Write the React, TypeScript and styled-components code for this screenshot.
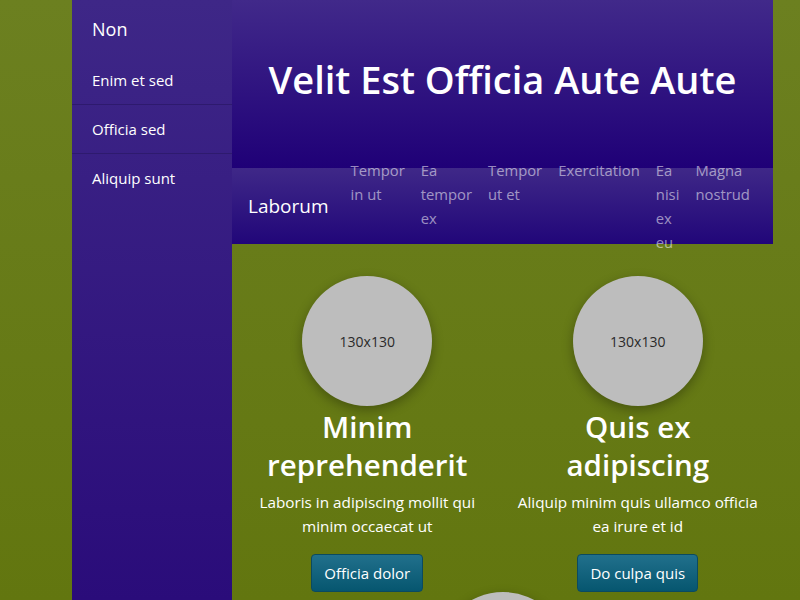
import React from "react";
import styled, { createGlobalStyle } from "styled-components";

const FONT = `"Open Sans", "Noto Sans", "Liberation Sans", sans-serif`;

const Global = createGlobalStyle`
  html, body { margin: 0; padding: 0; }
  body {
    font-family: ${FONT};
    background: linear-gradient(180deg, #6c8020 0%, #62760f 100%);
    min-height: 600px;
    overflow: hidden;
  }
  * { box-sizing: border-box; }
`;

const Page = styled.div`
  display: flex;
  align-items: stretch;
  padding-left: 72px;
  height: 600px;
  overflow: hidden;
`;

const Sidebar = styled.aside`
  width: 160px;
  flex: 0 0 160px;
  height: 600px;
  background: linear-gradient(180deg, #3e2787 0%, #2a0c7a 100%);
  color: #fff;
`;

const SideTitle = styled.div`
  padding: 17px 20px 15px;
  font-size: 18px;
  line-height: 24px;
`;

const SideList = styled.ul`
  list-style: none;
  margin: 0;
  padding: 0;
`;

const SideItem = styled.li`
  padding: 12px 20px;
  font-size: 15px;
  line-height: 24px;
  border-bottom: 1px solid #2e1a6e;
  &:last-child { border-bottom: none; }
`;

const Main = styled.main`
  width: 541px;
  flex: 0 0 541px;
  display: flex;
  flex-direction: column;
`;

const Header = styled.header`
  height: 168px;
  flex: 0 0 168px;
  display: flex;
  align-items: center;
  justify-content: center;
  background: linear-gradient(180deg, #41298a 0%, #1f0077 100%);
`;

const Title = styled.h1`
  margin: 0;
  color: #fff;
  font-size: 38px;
  font-weight: 600;
  line-height: 1.2;
  padding-bottom: 8px;
`;

const NavBar = styled.nav`
  height: 76px;
  flex: 0 0 76px;
  display: flex;
  align-items: center;
  padding: 0 24px 0 16px;
  background: linear-gradient(180deg, #3f2888 0%, #210679 100%);
  position: relative;
  z-index: 1;
`;

const Brand = styled.div`
  color: #fff;
  font-size: 19px;
  line-height: 24px;
  flex: 0 0 auto;
  margin-right: 14px;
`;

const NavList = styled.ul`
  list-style: none;
  margin: 0;
  padding: 0;
  display: flex;
  align-items: flex-start;
  flex: 1 1 auto;
  min-width: 0;
`;

const NavItem = styled.li`
  padding: 0 8px;
  font-size: 14.8px;
  line-height: 24px;
  color: rgba(255, 255, 255, 0.55);
  flex: 0 1 auto;
  min-width: min-content;
`;

const Content = styled.section`
  display: flex;
  flex-wrap: wrap;
  justify-content: center;
  padding-top: 32px;
`;

const Card = styled.div`
  width: 50%;
  padding: 0 12px;
  display: flex;
  flex-direction: column;
  align-items: center;
  text-align: center;
  color: #fff;
`;

const Avatar = styled.div`
  width: 130px;
  height: 130px;
  flex: 0 0 130px;
  border-radius: 50%;
  background: #bdbdbd;
  box-shadow: 0 4px 12px rgba(0, 0, 0, 0.3);
  display: flex;
  align-items: center;
  justify-content: center;
  color: #2a2a2a;
  font-size: 14px;
`;

const CardTitle = styled.h2`
  margin: 2px 0 6px;
  font-size: 29.5px;
  font-weight: 600;
  line-height: 38px;
`;

const CardText = styled.p`
  margin: 0 0 16px;
  font-size: 15.3px;
  line-height: 24px;
`;

const Button = styled.button`
  font-family: ${FONT};
  font-size: 15px;
  line-height: 24px;
  color: #fff;
  padding: 6px 12px;
  border: 1px solid #0b4a60;
  border-radius: 4px;
  background: linear-gradient(180deg, #21708c 0%, #06566f 100%);
`;

const sideItems = ["Enim et sed", "Officia sed", "Aliquip sunt"];
const navItems = ["Tempor in ut", "Ea tempor ex", "Tempor ut et", "Exercitation", "Ea nisi ex eu", "Magna nostrud"];
const cards = [
  { title: "Minim reprehenderit", text: "Laboris in adipiscing mollit qui minim occaecat ut", button: "Officia dolor" },
  { title: "Quis ex adipiscing", text: "Aliquip minim quis ullamco officia ea irure et id", button: "Do culpa quis" },
  { title: "Irure nisi", text: "Dolore sit amet", button: "Enim" },
];

export default function App() {
  return (
    <>
      <Global />
      <Page>
        <Sidebar>
          <SideTitle>Non</SideTitle>
          <SideList>
            {sideItems.map((s) => (
              <SideItem key={s}>{s}</SideItem>
            ))}
          </SideList>
        </Sidebar>
        <Main>
          <Header>
            <Title>Velit Est Officia Aute Aute</Title>
          </Header>
          <NavBar>
            <Brand>Laborum</Brand>
            <NavList>
              {navItems.map((n) => (
                <NavItem key={n}>{n}</NavItem>
              ))}
            </NavList>
          </NavBar>
          <Content>
            {cards.map((c) => (
              <Card key={c.title}>
                <Avatar>130x130</Avatar>
                <CardTitle>{c.title}</CardTitle>
                <CardText>{c.text}</CardText>
                <Button>{c.button}</Button>
              </Card>
            ))}
          </Content>
        </Main>
      </Page>
    </>
  );
}
